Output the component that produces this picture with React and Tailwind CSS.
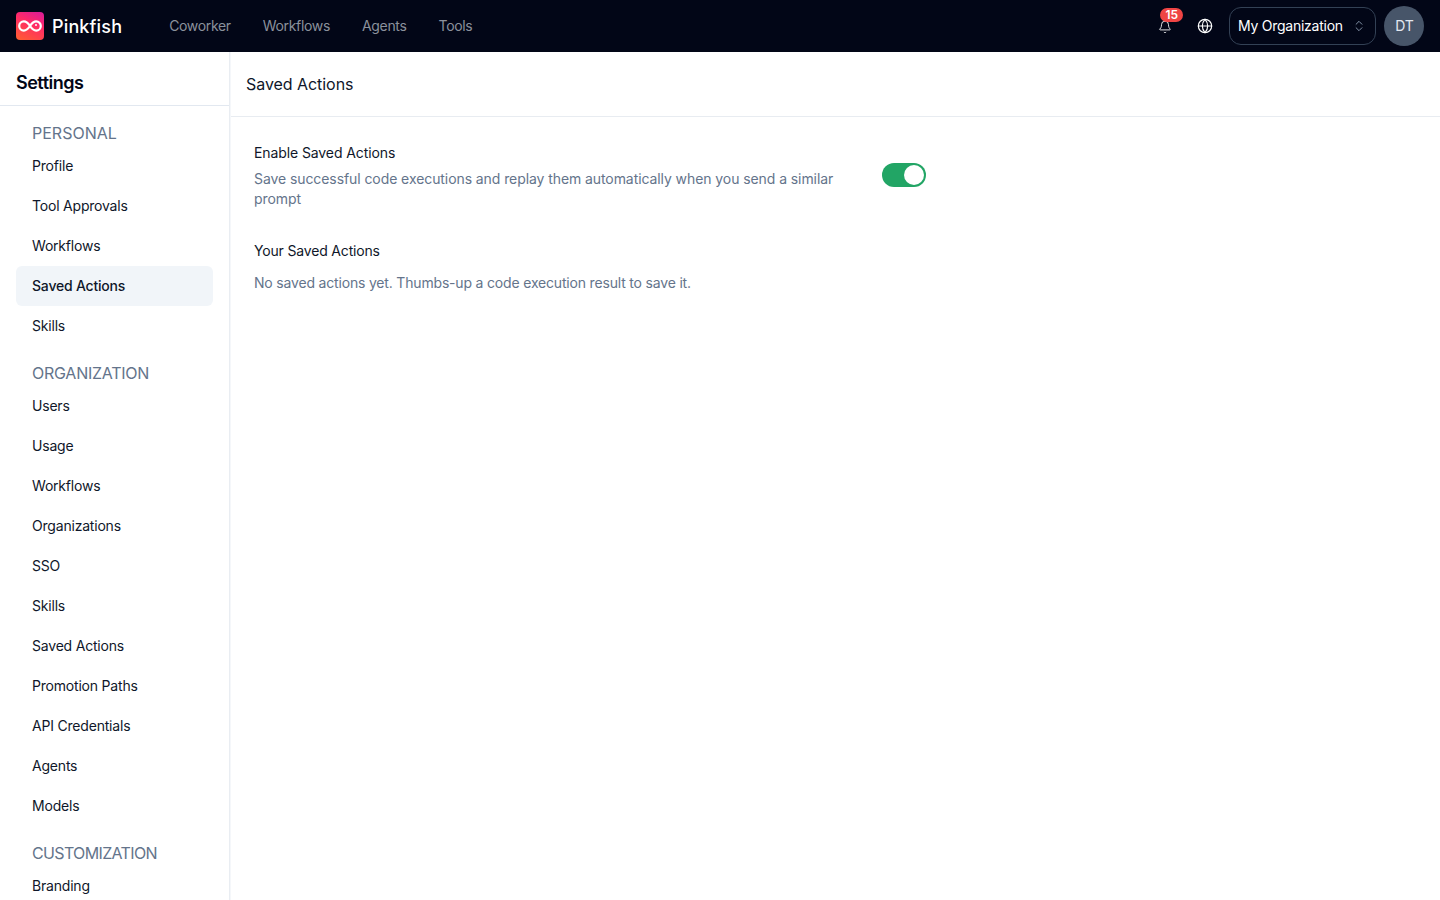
import { Bell, Globe, ChevronsUpDown } from 'lucide-react';

const personal = ['Profile', 'Tool Approvals', 'Workflows', 'Saved Actions', 'Skills'];
const organization = ['Users', 'Usage', 'Workflows', 'Organizations', 'SSO', 'Skills', 'Saved Actions', 'Promotion Paths', 'API Credentials', 'Agents', 'Models'];
const customization = ['Branding'];

function Logo() {
    return (
        <div className="w-7 h-7 rounded-[4px] bg-[linear-gradient(205deg,#d81b9c,#ff2a68_40%,#ff5f2e)] flex items-center justify-center">
            <svg width="24" height="12" viewBox="0 0 24 12" fill="none" stroke="white" strokeWidth="2.200">
                <path d="M12 6C10 3 8.200 1.400 5.800 1.400a4.600 4.600 0 0 0 0 9.200C8.200 10.600 10 9 12 6c2-3 3.800-4.600 6.200-4.600a4.600 4.600 0 0 1 0 9.200C15.800 10.600 14 9 12 6Z" />
                <circle cx="18" cy="5" r="1" fill="white" stroke="none" />
            </svg>
        </div>
    );
}

function NavSection({ title, titleClass, items, active }) {
    return (
        <div className="mb-4">
            <div className={`h-[24px] pb-[2px] px-4 flex items-center text-base text-[#64748b] ${titleClass}`}>{title}</div>
            {items.map((item, i) => (
                <div
                    key={i}
                    className={`h-10 px-4 flex items-center text-sm tracking-[-0.2px] rounded-md text-[#0f172a] ${i === active ? 'bg-[#f1f5f9] font-medium' : ''}`}
                >
                    {item}
                </div>
            ))}
        </div>
    );
}

export default function App() {
    return (
        <div className="h-[900px] flex flex-col overflow-hidden bg-white font-['Inter',sans-serif]">
            <header className="h-[52px] shrink-0 bg-[#020617] flex items-center px-4">
                <Logo />
                <span className="ml-2 pt-[1px] text-lg font-medium text-white tracking-[0.15px]">Pinkfish</span>
                <nav className="ml-[47px] flex items-center gap-8 text-sm tracking-[-0.33px] text-[#8b919c]">
                    <span>Coworker</span>
                    <span>Workflows</span>
                    <span>Agents</span>
                    <span>Tools</span>
                </nav>
                <div className="ml-auto flex items-center">
                    <div className="relative mr-[25px]">
                        <Bell size={14} strokeWidth={1.5} className="text-white translate-y-[1px]" />
                        <span className="absolute -top-[11px] -right-[11px] h-[14px] px-[5px] rounded-full bg-[#ef4444] text-xs leading-[14px] font-semibold text-white">15</span>
                    </div>
                    <Globe size={16} strokeWidth={1.75} className="text-white mr-4" />
                    <div className="w-[147px] h-[38px] rounded-xl border border-[#334155] flex items-center justify-between pl-2 pr-[9px] text-sm tracking-[-0.25px] text-white mr-2">
                        <span>My Organization</span>
                        <ChevronsUpDown size={14} strokeWidth={1.5} className="text-[#94a3b8]" />
                    </div>
                    <div className="w-10 h-10 rounded-full bg-[#475569] flex items-center justify-center text-sm text-[#e2e8f0] pl-[1px]">DT</div>
                </div>
            </header>
            <div className="flex-1 flex min-h-0">
                <aside className="w-[230px] shrink-0 border-r border-[#e9edf2] flex flex-col overflow-hidden">
                    <div className="h-[54px] shrink-0 px-4 pt-2 flex items-center border-b border-[#e2e8f0] text-lg font-semibold tracking-[-0.5px] text-[#020617]">Settings</div>
                    <div className="pt-4 px-4">
                        <NavSection title="PERSONAL" titleClass="" items={personal} active={3} />
                        <NavSection title="ORGANIZATION" titleClass="tracking-[-0.25px]" items={organization} />
                        <NavSection title="CUSTOMIZATION" titleClass="tracking-[-0.65px]" items={customization} />
                    </div>
                </aside>
                <main className="flex-1 min-w-0 border-l border-[#f5f7fa]">
                    <div className="h-[65px] px-[15px] flex items-center border-b border-[#e8ecf1] text-base tracking-[-0.05px] text-[#0f172a]">Saved Actions</div>
                    <div className="pl-[23px] pr-6 pt-[26px]">
                        <div className="flex items-start w-[672px] justify-between">
                            <div className="w-[600px]">
                                <div className="text-sm leading-5 tracking-[-0.1px] text-[#0f172a]">Enable Saved Actions</div>
                                <p className="mt-[6px] text-sm leading-5 tracking-[-0.08px] text-[#64748b]">Save successful code executions and replay them automatically when you send a similar prompt</p>
                            </div>
                            <div className="mt-[20px] w-[44px] h-[24px] rounded-full bg-[#22a565] p-[2px] flex justify-end">
                                <div className="w-5 h-5 rounded-full bg-white" />
                            </div>
                        </div>
                        <div className="mt-[32px] text-sm leading-5 tracking-[-0.17px] text-[#0f172a]">Your Saved Actions</div>
                        <p className="mt-3 text-sm leading-5 tracking-[-0.18px] text-[#64748b]">No saved actions yet. Thumbs-up a code execution result to save it.</p>
                    </div>
                </main>
            </div>
        </div>
    );
}
